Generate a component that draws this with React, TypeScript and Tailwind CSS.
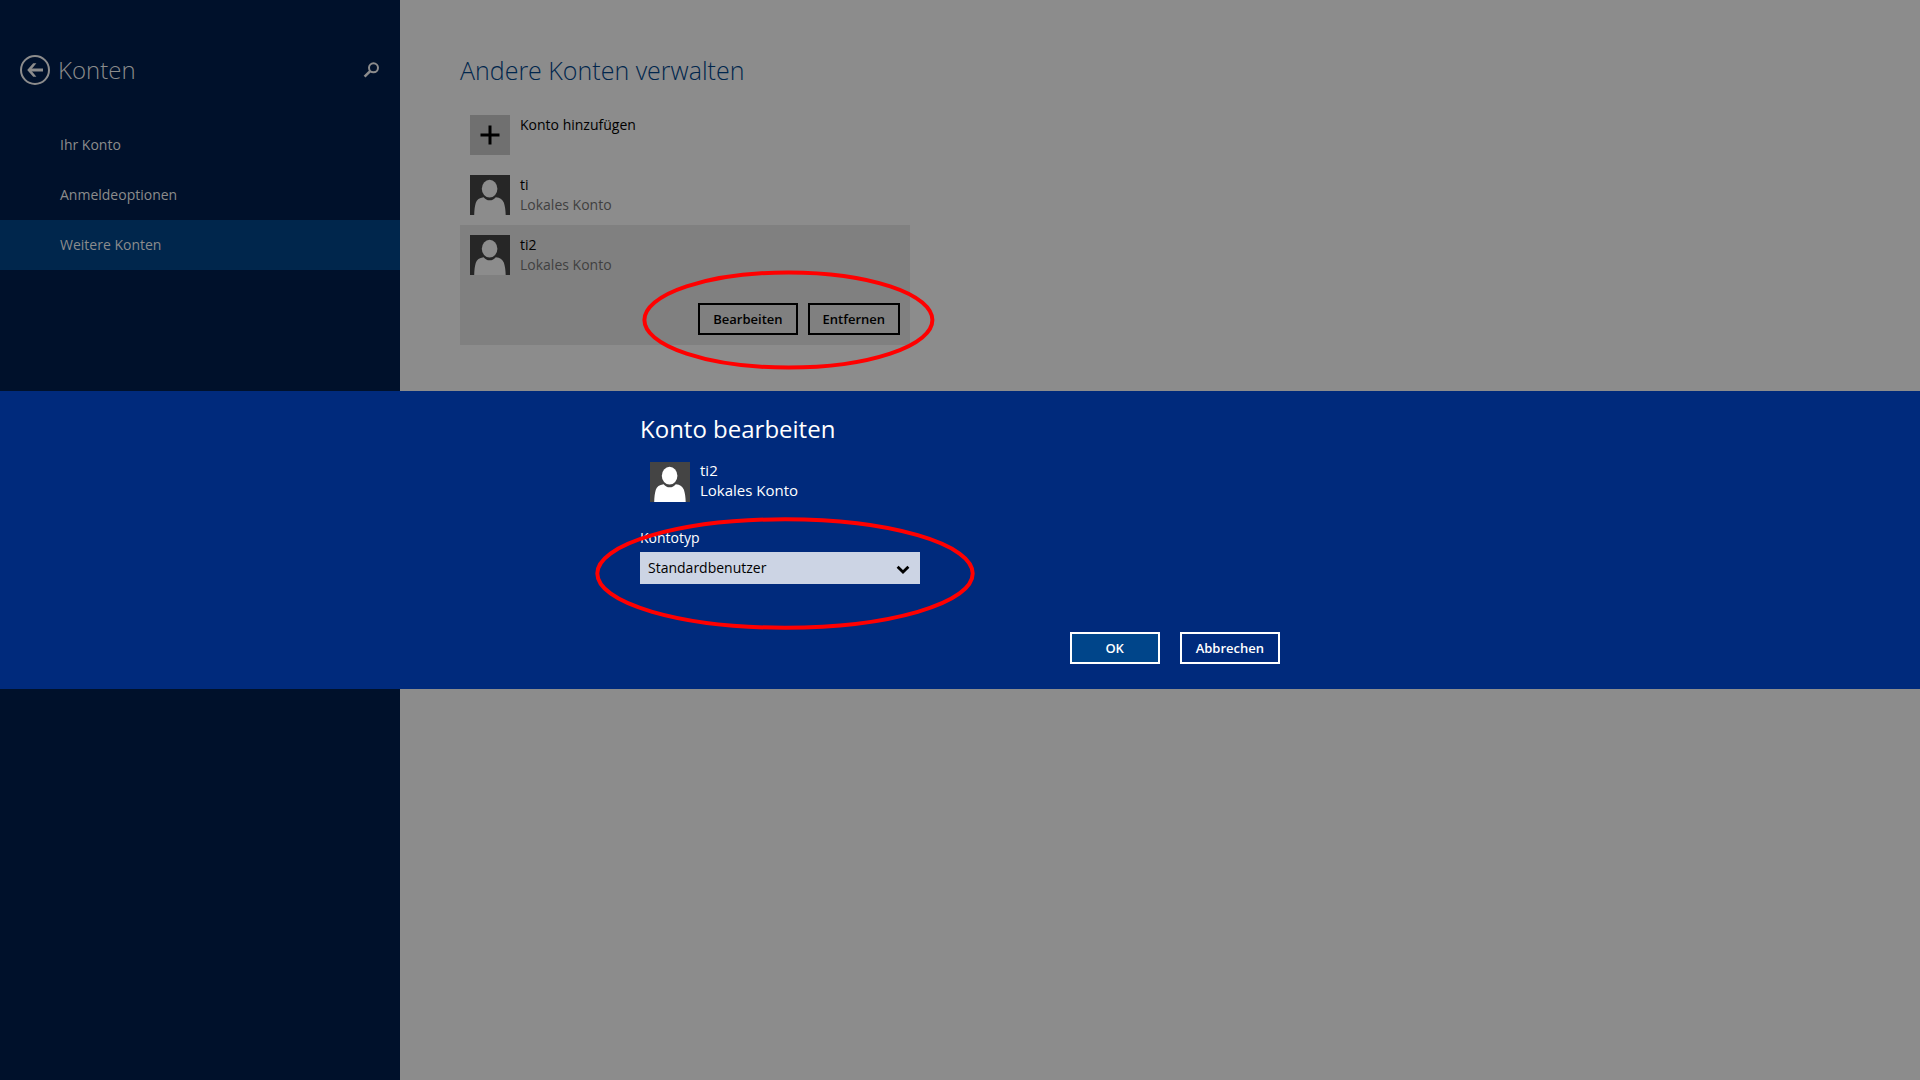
const navItems = [
  { label: "Ihr Konto", active: false },
  { label: "Anmeldeoptionen", active: false },
  { label: "Weitere Konten", active: true },
];

function Avatar({ dimmed = false }: { dimmed?: boolean }) {
  return (
    <svg
      viewBox="0 0 40 40"
      aria-hidden="true"
      className={`size-10 shrink-0 ${dimmed ? "bg-[#262626] text-[#8c8c8c]" : "bg-[#444444] text-white"}`}
    >
      <ellipse cx="19.6" cy="13.7" rx="7.8" ry="8.9" fill="currentColor" />
      <path
        fill="currentColor"
        d="M4.2 40C4.3 35.5 4.8 31 5.8 27.8C6.8 24.6 9.3 22.9 13.6 22.2C15.2 24.2 17.2 25.3 19.7 25.3C22.2 25.3 24.2 24.2 25.8 22.2C30.1 22.6 32.8 24.6 33.9 27.8C35 31 35.6 35.5 35.7 40Z"
      />
    </svg>
  );
}

function AccountText({ name, kind }: { name: string; kind: string }) {
  return (
    <span className="text-sm/5 text-black">
      <span className="block">{name}</span>
      <span className="block text-[#404040]">{kind}</span>
    </span>
  );
}

function Sidebar() {
  return (
    <aside className="w-[400px] shrink-0 bg-[#00112b] pt-[54px] text-[#8c8c8c]">
      <header className="flex h-8 items-center pr-[21px] pl-5">
        <button type="button" aria-label="Zurück" className="size-[30px]">
          <svg viewBox="0 0 30 30" className="size-[30px]" fill="none" stroke="currentColor">
            <circle cx="15" cy="15" r="14" strokeWidth="2" />
            <path d="M9 15H23" strokeWidth="3" />
            <path d="M7.2 15L13.2 8.2H16.4L10.8 15L16.4 21.8H13.2Z" fill="currentColor" stroke="none" />
          </svg>
        </button>
        <h1 className="ml-2 text-2xl/8 font-light">Konten</h1>
        <button type="button" aria-label="Suchen" className="ml-auto size-4">
          <svg viewBox="0 0 16 16" className="size-4" fill="none" stroke="currentColor" strokeWidth="2">
            <circle cx="10.5" cy="5.8" r="4.5" />
            <path d="M7.4 8.8L1.6 14.6" strokeWidth="2.6" />
          </svg>
        </button>
      </header>
      <nav className="mt-[34px]">
        {navItems.map((item) => (
          <a
            key={item.label}
            href="#"
            aria-current={item.active ? "page" : undefined}
            className={`flex h-[50px] items-center pl-[60px] text-sm/5 ${item.active ? "bg-[#00264c]" : ""}`}
          >
            {item.label}
          </a>
        ))}
      </nav>
    </aside>
  );
}

function AccountList() {
  const action = "h-8 border-2 border-black px-[13px] text-[13px]/5 font-semibold text-black";
  return (
    <main className="flex-1 bg-[#8c8c8c] pt-[54px] pl-[60px]">
      <h2 className="text-[25px]/8 font-light text-[#00264c]">Andere Konten verwalten</h2>
      <ul className="mt-[19px] w-[450px]">
        <li>
          <button type="button" className="flex w-full gap-2.5 p-2.5 text-left">
            <span className="flex size-10 items-center justify-center bg-[#707070]">
              <svg viewBox="0 0 20 20" className="size-5" stroke="black" strokeWidth="3" aria-hidden="true">
                <path d="M10 0.5V19.5M0.5 10H19.5" />
              </svg>
            </span>
            <span className="text-sm/5 text-black">Konto hinzufügen</span>
          </button>
        </li>
        <li className="flex gap-2.5 p-2.5">
          <Avatar dimmed />
          <AccountText name="ti" kind="Lokales Konto" />
        </li>
        <li className="relative bg-[#808080] p-2.5">
          <div className="flex gap-2.5">
            <Avatar dimmed />
            <AccountText name="ti2" kind="Lokales Konto" />
          </div>
          <div className="mt-7 flex justify-end gap-2.5">
            <button type="button" className={action}>Bearbeiten</button>
            <button type="button" className={action}>Entfernen</button>
          </div>
          <svg
            viewBox="0 0 294 100"
            aria-hidden="true"
            className="pointer-events-none absolute -right-[26px] -bottom-[25px] h-[100px] w-[294px]"
          >
            <ellipse cx="146.4" cy="50" rx="144" ry="47.6" fill="none" stroke="red" strokeWidth="4" />
          </svg>
        </li>
      </ul>
    </main>
  );
}

function EditDialog() {
  return (
    <div className="fixed inset-0 flex items-center">
      <section role="dialog" aria-labelledby="dialog-title" className="w-full bg-[#002a7c] pt-[22px] pb-[25px] text-white">
        <div className="mx-auto w-[640px]">
          <h2 id="dialog-title" className="text-2xl/8">Konto bearbeiten</h2>
          <div className="mt-[15px] ml-2.5 flex items-end gap-2.5">
            <Avatar />
            <p className="pb-0.5 text-[15px]/5">
              ti2
              <br />
              Lokales Konto
            </p>
          </div>
          <div className="relative mt-[26px] w-[280px]">
            <label htmlFor="account-type" className="block text-sm/5">Kontotyp</label>
            <select
              id="account-type"
              className="mt-1 block h-8 w-full appearance-none bg-[#ccd4e4] px-2 text-sm/5 text-black"
            >
              <option>Standardbenutzer</option>
              <option>Administrator</option>
            </select>
            <svg
              viewBox="0 0 14 10"
              aria-hidden="true"
              className="pointer-events-none absolute right-2.5 bottom-[9px] h-2.5 w-3.5"
            >
              <path d="M1.6 1.8L7 7L12.4 1.8" fill="none" stroke="black" strokeWidth="2.8" />
            </svg>
            <svg
              viewBox="0 0 380 114"
              aria-hidden="true"
              className="pointer-events-none absolute -bottom-[46px] -left-[45px] h-[114px] w-[380px] max-w-none"
            >
              <ellipse cx="190" cy="57.5" rx="187.7" ry="54.2" fill="none" stroke="red" strokeWidth="4" />
            </svg>
          </div>
          <div className="mt-12 flex justify-end gap-5">
            <button type="button" className="h-8 w-[90px] border-2 border-white bg-[#00458a] text-[13px]/5 font-semibold">OK</button>
            <button type="button" className="h-8 border-2 border-white px-[14px] text-[13px]/5 font-semibold">Abbrechen</button>
          </div>
        </div>
      </section>
    </div>
  );
}

export default function App() {
  return (
    <div className="flex min-h-screen font-['Open_Sans','Noto_Sans',sans-serif]">
      <Sidebar />
      <AccountList />
      <EditDialog />
    </div>
  );
}
